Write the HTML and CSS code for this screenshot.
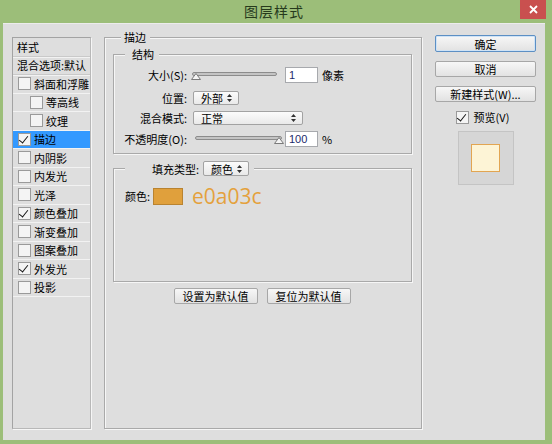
FILE: index.html
```html
<!DOCTYPE html>
<html>
    <head>
        <title>图层样式</title>
        <link rel="stylesheet" href="styles.css">
    </head>
    <body>
        <div class="window">
            <div class="titlebar">
                <span></span>
                <span class="title">图层样式</span>
                <span class="close">
                    <svg width="9" height="9" viewBox="0 0 9 9"><path d="M1 1 L8 8 M8 1 L1 8" stroke="#fff" stroke-width="1.8"/></svg>
                </span>
            </div>
            <div class="content">
                <div class="styles">
                    <div class="head">样式</div>
                    <div class="head">混合选项:默认</div>
                    <div class="item"><span class="box"></span>斜面和浮雕</div>
                    <div class="item sub"><span class="box"></span>等高线</div>
                    <div class="item sub"><span class="box"></span>纹理</div>
                    <div class="item selected"><span class="box on"></span>描边</div>
                    <div class="item"><span class="box"></span>内阴影</div>
                    <div class="item"><span class="box"></span>内发光</div>
                    <div class="item"><span class="box"></span>光泽</div>
                    <div class="item"><span class="box on"></span>颜色叠加</div>
                    <div class="item"><span class="box"></span>渐变叠加</div>
                    <div class="item"><span class="box"></span>图案叠加</div>
                    <div class="item"><span class="box on"></span>外发光</div>
                    <div class="item"><span class="box"></span>投影</div>
                </div>

                <fieldset class="group stroke">
                    <legend>描边</legend>
                    <fieldset class="group structure">
                        <legend>结构</legend>
                        <div class="row size">
                            <span class="lbl">大小(S):</span>
                            <div class="slider">
                                <span class="track"></span>
                                <svg class="thumb" width="10" height="7" viewBox="0 0 10 7"><path d="M5 0.5 L9.5 6.5 L0.5 6.5 Z" fill="#f4f4f4" stroke="#7a7a7a"/></svg>
                            </div>
                            <span class="num">1</span>
                            <span class="unit">像素</span>
                        </div>
                        <div class="row pos">
                            <span class="lbl">位置:</span>
                            <span class="select short">外部<svg class="arrows" width="5" height="8" viewBox="0 0 5 8"><path d="M2.5 0 L5 3 L0 3 Z M2.5 8 L5 5 L0 5 Z" fill="#333"/></svg></span>
                        </div>
                        <div class="row mode">
                            <span class="lbl">混合模式:</span>
                            <span class="select long">正常<svg class="arrows" width="5" height="8" viewBox="0 0 5 8"><path d="M2.5 0 L5 3 L0 3 Z M2.5 8 L5 5 L0 5 Z" fill="#333"/></svg></span>
                        </div>
                        <div class="row opacity">
                            <span class="lbl">不透明度(O):</span>
                            <div class="slider full">
                                <span class="track"></span>
                                <svg class="thumb" width="10" height="7" viewBox="0 0 10 7"><path d="M5 0.5 L9.5 6.5 L0.5 6.5 Z" fill="#f4f4f4" stroke="#7a7a7a"/></svg>
                            </div>
                            <span class="num">100</span>
                            <span class="unit">%</span>
                        </div>
                    </fieldset>

                    <fieldset class="group fill">
                        <legend>
                            <span>填充类型:</span>
                            <span class="select tiny">颜色<svg class="arrows" width="5" height="8" viewBox="0 0 5 8"><path d="M2.5 0 L5 3 L0 3 Z M2.5 8 L5 5 L0 5 Z" fill="#333"/></svg></span>
                        </legend>
                        <div class="color-row">
                            <span>颜色:</span>
                            <span class="swatch"></span>
                            <span class="hex">e0a03c</span>
                        </div>
                    </fieldset>

                    <div class="defaults">
                        <button>设置为默认值</button>
                        <button>复位为默认值</button>
                    </div>
                </fieldset>

                <div class="actions">
                    <button class="primary">确定</button>
                    <button>取消</button>
                    <button>新建样式(W)...</button>
                    <div class="preview-check"><span class="box on"></span>预览(V)</div>
                    <div class="preview">
                        <span class="preview-swatch"></span>
                    </div>
                </div>
            </div>
        </div>
    </body>
</html>
```

FILE: styles.css
```css
body{
    margin: 0;
    font-family: "Liberation Sans", "Noto Sans CJK SC", sans-serif;
    font-size: 11px;
    color: #000;
}
.window{
    width: 552px;
    height: 444px;
    box-sizing: border-box;
    background-color: #9cbe79;
    padding: 0 7px 4px 3px;

    display: flex;
    flex-direction: column;
}
.titlebar{
    height: 23px;
    flex: none;

    display: grid;
    grid-template-columns: 1fr auto 1fr;
    align-items: start;
}
.title{
    font-family: "Noto Sans CJK SC", sans-serif;
    font-size: 14px;
    line-height: 22px;
    color: #263a1c;
    letter-spacing: 1px;
}
.close{
    justify-self: end;
    width: 26px;
    height: 19px;
    margin-right: -1px;
    background-color: #c9504f;

    display: flex;
    align-items: center;
    justify-content: center;
}
.content{
    flex: 1;
    background-color: #dedede;
    box-shadow: inset 0 1px 0 #ececec;
    padding: 7px 9px 11px 9px;

    display: flex;
    flex-direction: row;
    gap: 13px;
}

/* left list */
.styles{
    width: 79px;
    box-sizing: border-box;
    margin-top: 7px;
    border: 1px solid #a3a3a3;
    border-right-color: #b8b8b8;
    border-bottom-color: #b8b8b8;
    box-shadow: 1px 1px 0 #f6f6f6;
    font-family: "Noto Sans CJK SC", sans-serif;
}
.head, .item{
    height: 17.5px;
    line-height: 16px;
    border-bottom: 1px solid #f2f2f2;
    white-space: nowrap;
    overflow: hidden;

    display: flex;
    align-items: center;
}
.head{
    padding-left: 4px;
    border-bottom-color: #c9c9c9;
    box-shadow: 0 1px 0 #f2f2f2;
}
.item{
    padding-left: 5px;
}
.item.sub{
    padding-left: 17px;
}
.item.selected{
    background-color: #3399ff;
}
.box{
    width: 11px;
    height: 11px;
    flex: none;
    margin-right: 3px;
    border: 1px solid #9a9a9a;
    background-color: #f4f4f4;
    position: relative;
}
.box.on::after{
    content: "";
    position: absolute;
    left: 2px;
    top: 0px;
    width: 4px;
    height: 8px;
    border-right: 1.6px solid #111;
    border-bottom: 1.6px solid #111;
    transform: rotate(38deg);
}

/* middle */
.group{
    margin: 0;
    padding: 0;
    min-width: 0;
    border: 1px solid #a9a9a9;
    box-shadow: inset 1px 1px 0 #f6f6f6, 1px 1px 0 #f6f6f6;
}
.group legend{
    font-family: "Noto Sans CJK SC", sans-serif;
    line-height: 14px;
    background-color: #dedede;
}
.stroke{
    width: 318px;
    box-sizing: border-box;
}
.stroke > legend{
    margin-left: 16px;
    padding: 0 4px 0 3px;
}
.structure{
    margin: 3px 9px 0 8px;
    padding: 6px 0 6px 0;
}
.structure > legend{
    margin-left: 11px;
    padding: 0 5px 0 7px;
}
.row{
    display: flex;
    align-items: center;
    font-family: "Noto Sans CJK SC", sans-serif;
}
.row.size{ height: 16px; }
.row.pos{ height: 14px; margin-top: 8px; }
.row.mode{ height: 14px; margin-top: 6px; }
.row.opacity{ height: 16px; margin-top: 6px; }
.lbl{
    width: 73px;
    text-align: right;
    white-space: nowrap;
}
.slider{
    width: 85px;
    height: 16px;
    margin-left: 5px;
    position: relative;
}
.slider.full{
    width: 87px;
    margin-left: 8px;
}
.track{
    position: absolute;
    left: 0;
    right: 0;
    top: 5px;
    height: 2px;
    border: 1px solid #8c8c8c;
    border-radius: 2px;
    background-color: #c4c4c4;
}
.thumb{
    position: absolute;
    left: -1px;
    top: 6px;
}
.slider.full .thumb{
    left: auto;
    right: -2px;
}
.num{
    width: 33px;
    height: 16px;
    box-sizing: border-box;
    margin-left: 8px;
    padding-left: 3px;
    border: 1px solid #a7a9ad;
    background-color: #fff;
    font-family: "Liberation Sans", sans-serif;
    font-size: 11px;
    line-height: 14px;
    color: #1d2a6b;
}
.opacity .num{
    margin-left: 3px;
}
.unit{
    margin-left: 4px;
}
.select{
    height: 14px;
    box-sizing: border-box;
    padding: 0 6px 0 7px;
    border: 1px solid #a2a2a2;
    border-radius: 2px;
    background: linear-gradient(#fbfbfb, #e9e9e9);
    font-family: "Noto Sans CJK SC", sans-serif;
    line-height: 12px;

    display: flex;
    align-items: center;
    justify-content: space-between;
}
.select.short{
    width: 46px;
    margin-left: 6px;
}
.select.long{
    width: 110px;
    margin-left: 6px;
}
.select.tiny{
    width: 46px;
    height: 15px;
    margin-left: 4px;
}
.fill{
    margin: 7px 9px 0 8px;
    height: 121px;
    box-sizing: border-box;
}
.fill > legend{
    margin-left: 11px;
    padding: 0 5px 0 27px;

    display: flex;
    align-items: center;
}
.color-row{
    margin-top: 10px;
    padding-left: 11px;
    font-family: "Noto Sans CJK SC", sans-serif;

    display: flex;
    align-items: center;
}
.swatch{
    width: 30px;
    height: 17px;
    box-sizing: border-box;
    margin-left: 3px;
    border: 1px solid #b98330;
    background-color: #e0a03c;
}
.hex{
    margin-left: 9px;
    font-family: "Open Sans", sans-serif;
    font-size: 21px;
    line-height: 20px;
    color: #e4a13c;
}
.defaults{
    margin-top: 6px;
    display: flex;
    justify-content: center;
    gap: 9px;
    padding-right: 2px;
}
button{
    height: 16px;
    padding: 0;
    border: 1px solid #a7a7a7;
    border-radius: 2px;
    background: linear-gradient(#f7f7f7, #e2e2e2);
    font-family: "Noto Sans CJK SC", sans-serif;
    font-size: 11px;
    line-height: 14px;
    color: #000;
}
.defaults button{
    width: 84px;
}

/* right column */
.actions{
    width: 101px;
    margin-top: 5px;

    display: flex;
    flex-direction: column;
    align-items: center;
}
.actions button{
    width: 101px;
    margin-bottom: 9px;
}
.actions button.primary{
    height: 17px;
    border-color: #5c8fc4;
    box-shadow: inset 0 0 0 1px #cfe3f6;
    margin-bottom: 9px;
}
.preview-check{
    height: 12px;
    margin-right: 6px;
    font-family: "Noto Sans CJK SC", sans-serif;
    line-height: 12px;

    display: flex;
    align-items: center;
}
.preview-check .box{
    margin-right: 5px;
}
.preview{
    width: 56px;
    height: 54px;
    box-sizing: border-box;
    margin-top: 8px;
    border: 1px solid #c4c4c4;
    background-color: #d6d6d6;

    display: flex;
    align-items: center;
    justify-content: center;
}
.preview-swatch{
    width: 29px;
    height: 28px;
    box-sizing: border-box;
    border: 1px solid #e2a552;
    background-color: #fdf4d6;
}
```
